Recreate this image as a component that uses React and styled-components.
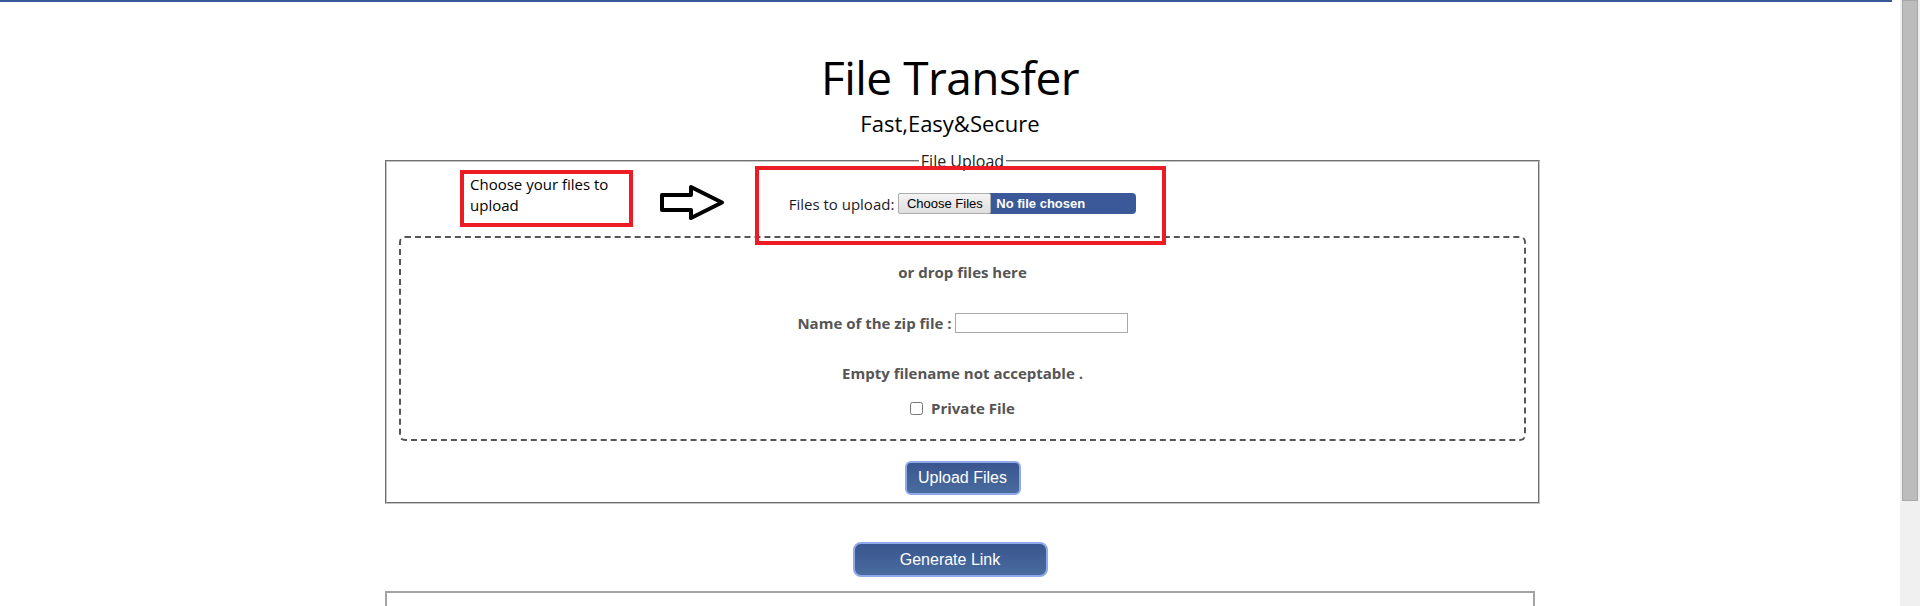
import React from 'react';
import styled, { createGlobalStyle } from 'styled-components';

const GlobalStyle = createGlobalStyle`
  html,
  body {
    margin: 0;
    padding: 0;
    background: #ffffff;
  }

  body {
    font-family: 'Open Sans', 'Noto Sans', sans-serif;
    color: #000000;
  }
`;

// Window frame: page column plus the browser scrollbar

const Viewport = styled.div`
  display: flex;
  align-items: flex-start;
`;

const PageBody = styled.main`
  flex: 1;
  min-width: 0;
`;

const ScrollTrack = styled.div`
  position: sticky;
  top: 0;
  flex: none;
  display: flex;
  justify-content: center;
  width: 20px;
  height: 100vh;
  background: #f0f0f0;
`;

const ScrollThumb = styled.div`
  box-sizing: border-box;
  width: 16px;
  height: 501px;
  background: #bcbcbc;
  border: 1px solid #a8a8a8;
`;

// Page header

const TopRule = styled.div`
  height: 2px;
  margin-right: 8px;
  background: #3b5998;
`;

const Title = styled.h1`
  margin: 52px 0 0;
  font-size: 46px;
  font-weight: 400;
  line-height: 46px;
  letter-spacing: -0.5px;
  text-align: center;
`;

const Tagline = styled.p`
  margin: 12px 0 0;
  font-size: 22px;
  line-height: 22px;
  text-align: center;
`;

// Upload form

const UploadSection = styled.section`
  position: relative;
  width: 1155px;
  margin: 18px 0 0 385px;
`;

const Fieldset = styled.fieldset`
  margin: 0;
  padding: 0 12px 7px;
  border: 2px groove #c4c4c4;
  min-width: 0;
`;

const Legend = styled.legend`
  margin: 0 auto;
  padding: 0 2px;
  font-size: 16px;
  line-height: 18px;
  color: #222222;
`;

const FileRow = styled.div`
  display: flex;
  justify-content: center;
  align-items: center;
  gap: 4px;
  height: 21px;
  margin-top: 23px;
  font-size: 15px;
  color: #1a1a2a;
`;

const FilePicker = styled.label`
  display: inline-flex;
  align-items: center;
  width: 238px;
  height: 21px;
  border-radius: 4px;
  background: #3b5998;
  font-family: 'Liberation Sans', Arial, sans-serif;
  font-size: 13px;
  cursor: pointer;
`;

const PickerButton = styled.span`
  box-sizing: border-box;
  display: inline-flex;
  align-items: center;
  justify-content: center;
  width: 93px;
  height: 21px;
  border: 1px solid #adadad;
  border-radius: 2px;
  background: linear-gradient(#f3f3f3, #dfdfdf);
  color: #000000;
`;

const PickerStatus = styled.span`
  padding-left: 5px;
  font-weight: 700;
  color: #ffffff;
`;

const DropZone = styled.div`
  display: flex;
  flex-direction: column;
  align-items: center;
  margin-top: 22px;
  padding: 24px 0 21px;
  border: 2px dashed #555555;
  border-radius: 6px;
  font-size: 15px;
  font-weight: 700;
  line-height: 20px;
  color: #555555;
`;

const DropLine = styled.div`
  margin-top: ${(p) => p.$gap || 0}px;
  display: flex;
  align-items: center;
  gap: ${(p) => p.$inner || 0}px;
  height: 20px;
`;

const NameInput = styled.input`
  box-sizing: border-box;
  width: 173px;
  height: 20px;
  padding: 1px 3px;
  border: 1px solid #a9a9a9;
  font-size: 13px;
`;

const Checkbox = styled.input`
  width: 13px;
  height: 13px;
  margin: 0;
`;

const ButtonRow = styled.div`
  display: flex;
  justify-content: center;
  margin-top: ${(p) => p.$gap}px;
`;

const ActionButton = styled.button`
  width: ${(p) => p.$width}px;
  height: ${(p) => p.$height}px;
  border: 2px solid #8fa9ea;
  border-radius: ${(p) => p.$radius || 6}px;
  background: linear-gradient(#39558f, #4a6c9f);
  color: #ffffff;
  font-family: 'Liberation Sans', Arial, sans-serif;
  font-size: 16px;
  cursor: pointer;
`;

// Annotations drawn over the screenshot

const NoteBox = styled.div`
  position: absolute;
  left: 75px;
  top: 18px;
  box-sizing: border-box;
  width: 173px;
  height: 57px;
  padding: 0 6px;
  border: 4px solid #ed1c24;
  font-size: 15px;
  line-height: 21px;
  color: #000000;
`;

const ArrowMark = styled.svg`
  position: absolute;
  left: 275px;
  top: 33px;
`;

const Highlight = styled.div`
  position: absolute;
  left: 370px;
  top: 14px;
  box-sizing: border-box;
  width: 411px;
  height: 79px;
  border: 4px solid #ed1c24;
  pointer-events: none;
`;

// Result area

const ResultBox = styled.div`
  box-sizing: border-box;
  width: 1150px;
  height: 134px;
  margin: 14px 0 0 385px;
  border: 2px solid #a3a3a3;
  border-bottom: none;
`;

const PageEnd = styled.div`
  height: 8px;
`;

const App = () => (
  <Viewport>
    <GlobalStyle />
    <PageBody>
      <TopRule />
      <Title>File Transfer</Title>
      <Tagline>Fast,Easy&amp;Secure</Tagline>

      <UploadSection>
        <Fieldset>
          <Legend>File Upload</Legend>
          <FileRow>
            <span>Files to upload:</span>
            <FilePicker>
              <PickerButton>Choose Files</PickerButton>
              <PickerStatus>No file chosen</PickerStatus>
            </FilePicker>
          </FileRow>

          <DropZone>
            <DropLine>or drop files here</DropLine>
            <DropLine $gap={31} $inner={3}>
              <span>Name of the zip file :</span>
              <NameInput type="text" />
            </DropLine>
            <DropLine $gap={30}>Empty filename not acceptable .</DropLine>
            <DropLine $gap={15} $inner={8}>
              <Checkbox type="checkbox" />
              <span>Private File</span>
            </DropLine>
          </DropZone>

          <ButtonRow $gap={20}>
            <ActionButton $width={116} $height={34}>
              Upload Files
            </ActionButton>
          </ButtonRow>
        </Fieldset>

        <NoteBox>Choose your files to upload</NoteBox>
        <ArrowMark width="66" height="36" viewBox="0 0 66 36">
          <polygon
            points="2,10 31,10 31,2 62,17.5 31,33 31,25 2,25"
            fill="none"
            stroke="#000"
            strokeWidth="4"
            strokeLinejoin="round"
          />
        </ArrowMark>
        <Highlight />
      </UploadSection>

      <ButtonRow $gap={38}>
        <ActionButton $width={195} $height={35} $radius={8}>
          Generate Link
        </ActionButton>
      </ButtonRow>

      <ResultBox />
      <PageEnd />
    </PageBody>
    <ScrollTrack>
      <ScrollThumb />
    </ScrollTrack>
  </Viewport>
);

export default App;
